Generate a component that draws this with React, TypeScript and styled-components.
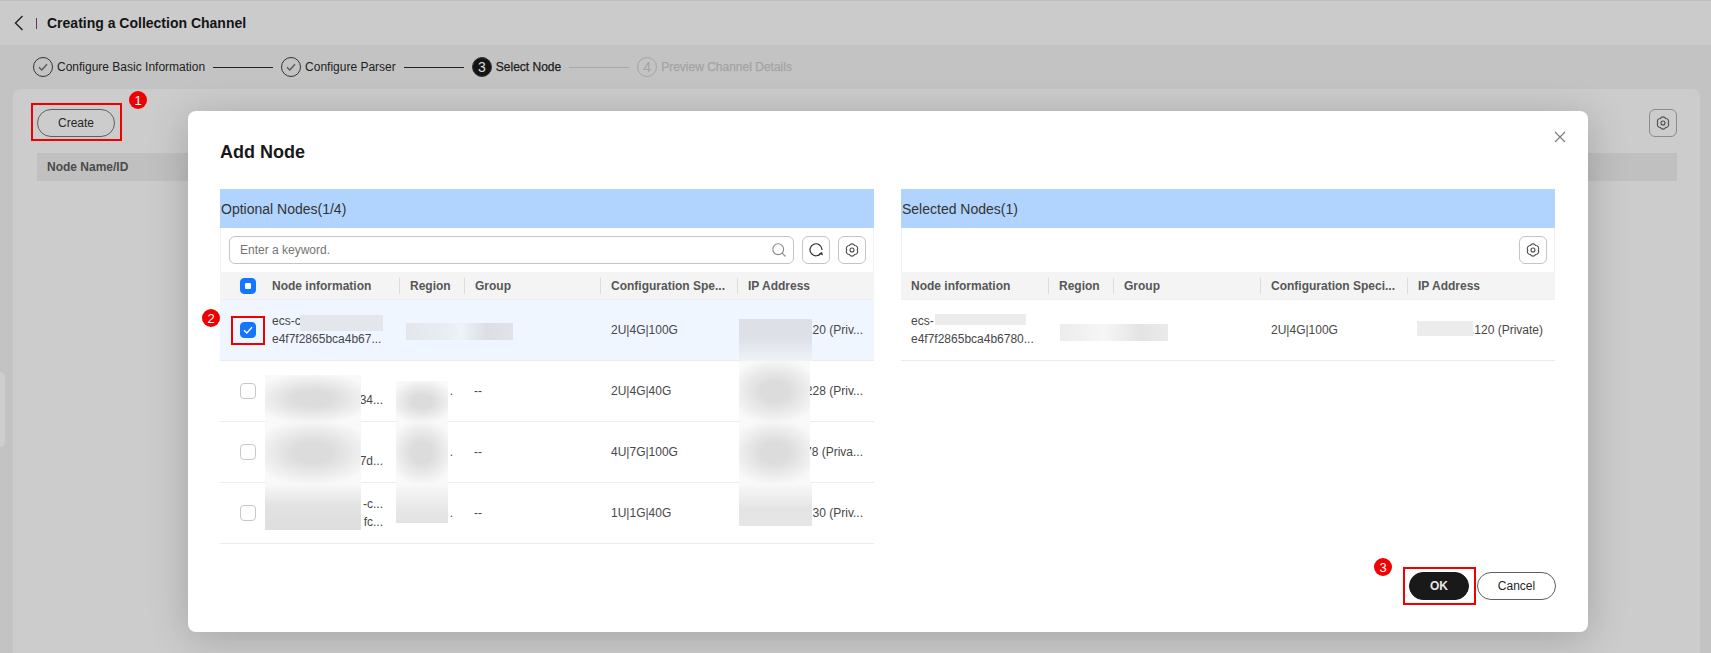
import React from "react";
import styled, { createGlobalStyle } from "styled-components";

const GlobalStyle = createGlobalStyle`
  html, body {
    margin: 0;
    padding: 0;
    background: #c3c3c3;
  }
  body {
    font-family: "Liberation Sans", Arial, sans-serif;
    color: #191919;
  }
  * {
    box-sizing: border-box;
  }
`;

const GearIcon = () => (
  <svg width="16" height="16" viewBox="0 0 16 16" fill="none">
    <path
      d="M13.200 8A2.900 2.900 0 0 1 10.600 12.500A2.900 2.900 0 0 1 5.400 12.500A2.900 2.900 0 0 1 2.800 8A2.900 2.900 0 0 1 5.400 3.500A2.900 2.900 0 0 1 10.600 3.500A2.900 2.900 0 0 1 13.200 8z"
      stroke="#4a4a4a"
      strokeWidth="1.100"
    />
    <circle cx="8" cy="8" r="2" stroke="#4a4a4a" strokeWidth="1.100" />
  </svg>
);

const RefreshIcon = () => (
  <svg width="16" height="16" viewBox="0 0 16 16" fill="none">
    <path
      d="M13.200 10.800A6 6 0 1 1 14 7.500"
      stroke="#2b2b2b"
      strokeWidth="1.200"
      strokeLinecap="round"
    />
    <path d="M11 11.500l3.200-.9.700 3z" fill="#2b2b2b" />
  </svg>
);

const SearchIcon = () => (
  <svg width="16" height="16" viewBox="0 0 16 16" fill="none">
    <circle cx="7.200" cy="7.200" r="5.400" stroke="#8a8a8a" strokeWidth="1.100" />
    <path d="M11.200 11.200l3.300 3.300" stroke="#8a8a8a" strokeWidth="1.100" />
  </svg>
);

const CheckMark = ({ color = "#fff" }: { color?: string }) => (
  <svg width="12" height="12" viewBox="0 0 12 12" fill="none">
    <path d="M2 6.300l2.800 2.700L10 3.300" stroke={color} strokeWidth="1.300" />
  </svg>
);

const Page = styled.div`
  position: relative;
  width: 1711px;
  height: 653px;
  overflow: hidden;
  background: #c3c3c3;
`;

const Header = styled.div`
  height: 45px;
  display: flex;
  align-items: center;
  padding-left: 14px;
  background: #cbcbcb;
  border-top: 1px solid #bdbdbd;
`;

const BackButton = styled.span`
  display: flex;
  width: 10px;
  margin-right: 12px;
`;

const HeaderBar = styled.span`
  width: 1px;
  height: 11px;
  margin-right: 10px;
  background: #5b3a5b;
`;

const PageTitle = styled.h1`
  margin: 0;
  font-size: 14px;
  font-weight: 700;
  color: #141414;
`;

const Stepper = styled.div`
  height: 44px;
  display: flex;
  align-items: center;
  padding-left: 33px;
`;

const StepCircle = styled.span<{ $state: "done" | "active" | "todo" }>`
  width: 20px;
  height: 20px;
  margin-right: 4px;
  display: flex;
  align-items: center;
  justify-content: center;
  border-radius: 50%;
  font-size: 14px;
  border: 1px solid ${(p) => (p.$state === "todo" ? "#a3a3a3" : "#333")};
  background: ${(p) => (p.$state === "active" ? "#141414" : "transparent")};
  color: ${(p) => (p.$state === "active" ? "#ddd" : "#a3a3a3")};
`;

const StepLabel = styled.span<{ $todo?: boolean; $active?: boolean }>`
  font-size: 12px;
  color: ${(p) => (p.$todo ? "#a3a3a3" : "#1e1e1e")};
  ${(p) => p.$active && "-webkit-text-stroke: 0.25px #1e1e1e;"}
  ${(p) => p.$todo && "-webkit-text-stroke: 0.25px #a3a3a3;"}
`;

const StepLine = styled.span<{ $todo?: boolean }>`
  width: 60px;
  height: 1px;
  margin: 0 8px;
  background: ${(p) => (p.$todo ? "#a8a8a8" : "#222")};
`;

const Card = styled.div`
  height: 564px;
  margin: 0 11px 0 13px;
  padding: 20px 23px 0 24px;
  background: #cccccc;
  border-radius: 8px 8px 0 0;
`;

const CardToolbar = styled.div`
  display: flex;
  justify-content: space-between;
  height: 28px;
`;

const PillButton = styled.button<{ $primary?: boolean; $width: number }>`
  width: ${(p) => p.$width}px;
  height: 28px;
  padding: 0;
  border-radius: 14px;
  font-family: inherit;
  font-size: 12px;
  font-weight: ${(p) => (p.$primary ? 700 : 400)};
  color: ${(p) => (p.$primary ? "#e6e6e6" : "#262626")};
  background: ${(p) => (p.$primary ? "#191919" : "transparent")};
  border: 1px solid ${(p) => (p.$primary ? "#191919" : "#5f5f5f")};
`;

const IconButton = styled.button<{ $dim?: boolean }>`
  width: 28px;
  height: 28px;
  padding: 0;
  display: flex;
  align-items: center;
  justify-content: center;
  flex: none;
  background: ${(p) => (p.$dim ? "transparent" : "#fff")};
  border: 1px solid ${(p) => (p.$dim ? "#8c8c8c" : "#c4c4c4")};
  border-radius: 6px;
`;

const CardTableHead = styled.div`
  height: 28px;
  margin-top: 16px;
  padding-left: 10px;
  display: flex;
  align-items: center;
  background: #c0c0c0;
  font-size: 12px;
  font-weight: 700;
  color: #4a4a4a;
`;

const Handle = styled.div`
  position: absolute;
  left: 0;
  top: 372px;
  width: 5px;
  height: 75px;
  border-radius: 0 5px 5px 0;
  background: #cdcdcd;
`;

const Modal = styled.div`
  position: absolute;
  left: 188px;
  top: 111px;
  width: 1400px;
  height: 521px;
  padding: 0 32px 32px 32px;
  display: flex;
  flex-direction: column;
  background: #fff;
  border-radius: 8px;
  box-shadow: 0 6px 40px rgba(0, 0, 0, 0.2);
`;

const CloseButton = styled.span`
  position: absolute;
  right: 22px;
  top: 20px;
  display: flex;
`;

const ModalTitle = styled.h2`
  margin: 0;
  height: 78px;
  padding-top: 30px;
  font-size: 18px;
  line-height: 22px;
  font-weight: 700;
  color: #191919;
`;

const Panels = styled.div`
  display: flex;
  gap: 27px;
  flex: 1;
`;

const Panel = styled.section<{ $width: number }>`
  width: ${(p) => p.$width}px;
`;

const PanelTitle = styled.div`
  height: 39px;
  display: flex;
  align-items: center;
  padding-left: 1px;
  background: #b0d4fd;
  font-size: 14px;
  color: #333;
`;

const Toolbar = styled.div`
  height: 44px;
  padding: 8px 7px 8px 8px;
  display: flex;
  justify-content: flex-end;
  gap: 8px;
  border: 1px solid #f2f2f2;
  border-width: 0 1px;
`;

const SearchBox = styled.div`
  flex: 1;
  height: 28px;
  display: flex;
  align-items: center;
  justify-content: space-between;
  padding: 0 6px 0 10px;
  border: 1px solid #c4c4c4;
  border-radius: 6px;
  font-size: 12px;
  color: #757575;
`;

const TableRow = styled.div<{ $columns: string; $head?: boolean; $picked?: boolean }>`
  display: grid;
  grid-template-columns: ${(p) => p.$columns};
  align-items: center;
  height: ${(p) => (p.$head ? 28 : 61)}px;
  font-size: 12px;
  line-height: 18px;
  color: ${(p) => (p.$head ? "#575757" : "#474747")};
  font-weight: ${(p) => (p.$head ? 700 : 400)};
  background: ${(p) => (p.$head ? "#f4f4f4" : p.$picked ? "#eff6ff" : "#fff")};
  border-bottom: 1px solid ${(p) => (p.$head ? "#efefef" : "#ececec")};
`;

const HeadCell = styled.div<{ $lead?: number }>`
  height: 16px;
  line-height: 16px;
  padding-left: ${(p) => p.$lead ?? 10}px;
  white-space: nowrap;
  overflow: hidden;
  border-left: 1px solid ${(p) => (p.$lead ? "transparent" : "#dcdcdc")};
`;

const Cell = styled.div<{ $end?: boolean; $left?: number; $right?: number }>`
  padding: 0 ${(p) => p.$right ?? 11}px 0 ${(p) => p.$left ?? 11}px;
  white-space: nowrap;
  overflow: hidden;
  text-align: ${(p) => (p.$end ? "right" : "left")};
`;

const BoxCell = styled.div`
  display: flex;
  padding-left: 20px;
`;

const CheckBox = styled.span<{ $state?: "on" | "part" }>`
  width: 16px;
  height: 16px;
  display: flex;
  align-items: center;
  justify-content: center;
  border-radius: 4px;
  background: ${(p) => (p.$state ? "#1476ff" : "#fff")};
  border: 1px solid ${(p) => (p.$state ? "#1476ff" : "#c7c7c7")};
`;

const PartMark = styled.span`
  width: 6px;
  height: 6px;
  border-radius: 1px;
  background: #fff;
`;

const Footer = styled.div`
  display: flex;
  justify-content: flex-end;
  gap: 8px;
  height: 28px;
`;

/* annotations and retouched patches drawn over the screenshot */
const Annotation = styled.span<{ $x: number; $y: number; $w: number; $h: number }>`
  position: absolute;
  left: ${(p) => p.$x}px;
  top: ${(p) => p.$y}px;
  width: ${(p) => p.$w}px;
  height: ${(p) => p.$h}px;
  border: 2px solid #f00000;
`;

const Badge = styled.span<{ $x: number; $y: number }>`
  position: absolute;
  left: ${(p) => p.$x - 9}px;
  top: ${(p) => p.$y - 9}px;
  width: 18px;
  height: 18px;
  display: flex;
  align-items: center;
  justify-content: center;
  border-radius: 50%;
  background: #f00000;
  color: #fff;
  font-size: 13px;
`;

const Smudge = styled.span<{ $x: number; $y: number; $w: number; $h: number; $bg: string }>`
  position: absolute;
  left: ${(p) => p.$x}px;
  top: ${(p) => p.$y}px;
  width: ${(p) => p.$w}px;
  height: ${(p) => p.$h}px;
  background: ${(p) => p.$bg};
`;

const leftColumns = "43px 136px 65px 136px 137px 137px";
const rightColumns = "147px 65px 147px 147px 147px";

const leftRows = [
  { node: ["ecs-c", "e4f7f2865bca4b67..."], nodeEnd: false, region: "", group: "", spec: "2U|4G|100G", ip: "120 (Priv...", picked: true },
  { node: ["", "34..."], nodeEnd: true, region: ".", group: "--", spec: "2U|4G|40G", ip: "228 (Priv..." },
  { node: ["", "7d..."], nodeEnd: true, region: ".", group: "--", spec: "4U|7G|100G", ip: "178 (Priva..." },
  { node: ["-c...", "fc..."], nodeEnd: true, region: ".", group: "--", spec: "1U|1G|40G", ip: "130 (Priv..." },
];

const grayPatch = "linear-gradient(90deg, #e3e6ea 0%, #e3e6ea 100%)";
const softPatch =
  "radial-gradient(ellipse 65% 55% at 50% 50%, #dcdcdc 30%, #ededed 72%, #f9f9f9 100%)";

const smudges = [
  // left table, first row
  { x: 300, y: 315, w: 83, h: 16, bg: grayPatch },
  { x: 406, y: 323, w: 107, h: 17, bg: "linear-gradient(90deg, #e3e7ec 0%, #e9eef3 40%, #eef3f8 52%, #dbdfe4 75%, #e0e4e9 100%)" },
  { x: 739, y: 319, w: 73, h: 42, bg: "linear-gradient(180deg, #dde1e7 0%, #dde1e7 45%, #eef3f9 100%)" },
  // left table, blurred rows
  { x: 265, y: 375, w: 96, h: 47, bg: softPatch },
  { x: 265, y: 422, w: 96, h: 61, bg: softPatch },
  { x: 265, y: 483, w: 96, h: 47, bg: "linear-gradient(180deg, #f9f9f9 0%, #e2e2e2 50%, #dedede 100%)" },
  { x: 396, y: 381, w: 52, h: 41, bg: softPatch },
  { x: 396, y: 422, w: 52, h: 61, bg: softPatch },
  { x: 396, y: 483, w: 52, h: 40, bg: "linear-gradient(180deg, #f9f9f9 0%, #e6e6e6 70%, #e2e2e2 100%)" },
  { x: 739, y: 361, w: 71, h: 61, bg: softPatch },
  { x: 739, y: 422, w: 71, h: 61, bg: softPatch },
  { x: 739, y: 483, w: 73, h: 43, bg: "linear-gradient(180deg, #f9f9f9 0%, #e4e4e4 60%, #e6e6e6 100%)" },
  // right table
  { x: 935, y: 314, w: 91, h: 11, bg: "#ececec" },
  { x: 1060, y: 324, w: 108, h: 17, bg: "linear-gradient(90deg, #ececec 0%, #f6f6f6 40%, #e4e4e4 75%, #eaeaea 100%)" },
  { x: 1417, y: 321, w: 56, h: 15, bg: "#ececec" },
];

const App = () => {
  return (
    <Page>
      <GlobalStyle />
      <Header>
        <BackButton>
          <svg width="10" height="16" viewBox="0 0 10 16" fill="none">
            <path d="M8.500 1L1.500 8l7 7" stroke="#222" strokeWidth="1.400" />
          </svg>
        </BackButton>
        <HeaderBar />
        <PageTitle>Creating a Collection Channel</PageTitle>
      </Header>
      <Stepper>
        <StepCircle $state="done">
          <CheckMark color="#555" />
        </StepCircle>
        <StepLabel>Configure Basic Information</StepLabel>
        <StepLine />
        <StepCircle $state="done">
          <CheckMark color="#555" />
        </StepCircle>
        <StepLabel>Configure Parser</StepLabel>
        <StepLine />
        <StepCircle $state="active">3</StepCircle>
        <StepLabel $active>Select Node</StepLabel>
        <StepLine $todo />
        <StepCircle $state="todo">4</StepCircle>
        <StepLabel $todo>Preview Channel Details</StepLabel>
      </Stepper>
      <Card>
        <CardToolbar>
          <PillButton $width={78}>Create</PillButton>
          <IconButton $dim>
            <GearIcon />
          </IconButton>
        </CardToolbar>
        <CardTableHead>Node Name/ID</CardTableHead>
      </Card>
      <Handle />

      <Modal>
        <CloseButton>
          <svg width="12" height="12" viewBox="0 0 12 12" fill="none">
            <path d="M1 1l10 10M11 1L1 11" stroke="#7a7a7a" strokeWidth="1.100" />
          </svg>
        </CloseButton>
        <ModalTitle>Add Node</ModalTitle>
        <Panels>
          <Panel $width={654}>
            <PanelTitle>Optional Nodes(1/4)</PanelTitle>
            <Toolbar>
              <SearchBox>
                Enter a keyword.
                <SearchIcon />
              </SearchBox>
              <IconButton>
                <RefreshIcon />
              </IconButton>
              <IconButton>
                <GearIcon />
              </IconButton>
            </Toolbar>
            <TableRow $head $columns={leftColumns}>
              <BoxCell>
                <CheckBox $state="part">
                  <PartMark />
                </CheckBox>
              </BoxCell>
              <HeadCell $lead={8}>Node information</HeadCell>
              <HeadCell>Region</HeadCell>
              <HeadCell>Group</HeadCell>
              <HeadCell>Configuration Spe...</HeadCell>
              <HeadCell>IP Address</HeadCell>
            </TableRow>
            {leftRows.map((row) => (
              <TableRow key={row.ip} $columns={leftColumns} $picked={row.picked}>
                <BoxCell>
                  <CheckBox $state={row.picked ? "on" : undefined}>
                    {row.picked && <CheckMark />}
                  </CheckBox>
                </BoxCell>
                <Cell $end={row.nodeEnd} $left={9} $right={16}>
                  {row.node[0] || "\u00a0"}
                  <br />
                  {row.node[1]}
                </Cell>
                <Cell $end>{row.region}</Cell>
                <Cell $left={10}>{row.group}</Cell>
                <Cell>{row.spec}</Cell>
                <Cell $end>{row.ip}</Cell>
              </TableRow>
            ))}
          </Panel>
          <Panel $width={654}>
            <PanelTitle>Selected Nodes(1)</PanelTitle>
            <Toolbar>
              <IconButton>
                <GearIcon />
              </IconButton>
            </Toolbar>
            <TableRow $head $columns={rightColumns}>
              <HeadCell $lead={9}>Node information</HeadCell>
              <HeadCell>Region</HeadCell>
              <HeadCell>Group</HeadCell>
              <HeadCell>Configuration Speci...</HeadCell>
              <HeadCell>IP Address</HeadCell>
            </TableRow>
            <TableRow $columns={rightColumns}>
              <Cell $left={10} $right={9}>
                ecs-
                <br />
                e4f7f2865bca4b6780...
              </Cell>
              <Cell />
              <Cell />
              <Cell>2U|4G|100G</Cell>
              <Cell $end>.120 (Private)</Cell>
            </TableRow>
          </Panel>
        </Panels>
        <Footer>
          <PillButton $primary $width={60}>OK</PillButton>
          <PillButton $width={79}>Cancel</PillButton>
        </Footer>
      </Modal>

      {smudges.map((s) => (
        <Smudge key={`${s.x}-${s.y}`} $x={s.x} $y={s.y} $w={s.w} $h={s.h} $bg={s.bg} />
      ))}

      <Annotation $x={31} $y={103} $w={91} $h={38} />
      <Badge $x={138} $y={100}>1</Badge>
      <Annotation $x={231} $y={316} $w={34} $h={29} />
      <Badge $x={211} $y={318}>2</Badge>
      <Annotation $x={1403} $y={567} $w={73} $h={38} />
      <Badge $x={1383} $y={567}>3</Badge>
    </Page>
  );
};

export default App;
